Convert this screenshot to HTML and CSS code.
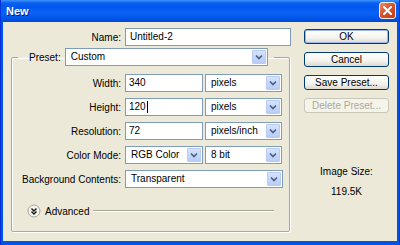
FILE: index.html
```html
<!DOCTYPE html>
<html lang="en">
<head>
    <meta charset="UTF-8">
    <title>New</title>
    <link rel="stylesheet" href="styles.css">
</head>
<body>
    <div class="window">
        <div class="titlebar">
            <span class="title">New</span>
            <span class="close">
                <svg width="9" height="9" viewBox="0 0 9 9"><path d="M1 1 L8 8 M8 1 L1 8" stroke="#fff" stroke-width="2" stroke-linecap="square"/></svg>
            </span>
        </div>
        <div class="content">
            <div class="main">
                <div class="name-row">
                    <label class="label">Name:</label>
                    <div class="field name-field">Untitled-2</div>
                </div>
                <fieldset class="group">
                    <legend class="preset">
                        <span class="preset-inner">
                            <label class="preset-label">Preset:</label>
                            <span class="combo preset-combo"><span class="val">Custom</span><span class="drop"><svg width="8" height="6" viewBox="0 0 8 6"><path d="M1 1.5 L4 4.5 L7 1.5" fill="none" stroke="#4d6185" stroke-width="1.7"/></svg></span></span>
                        </span>
                    </legend>
                    <div class="rows">
                        <label class="label">Width:</label>
                        <div class="field">340</div>
                        <span class="combo"><span class="val">pixels</span><span class="drop"><svg width="8" height="6" viewBox="0 0 8 6"><path d="M1 1.5 L4 4.5 L7 1.5" fill="none" stroke="#4d6185" stroke-width="1.7"/></svg></span></span>

                        <label class="label">Height:</label>
                        <div class="field">120<span class="caret"></span></div>
                        <span class="combo"><span class="val">pixels</span><span class="drop"><svg width="8" height="6" viewBox="0 0 8 6"><path d="M1 1.5 L4 4.5 L7 1.5" fill="none" stroke="#4d6185" stroke-width="1.7"/></svg></span></span>

                        <label class="label">Resolution:</label>
                        <div class="field">72</div>
                        <span class="combo"><span class="val">pixels/inch</span><span class="drop"><svg width="8" height="6" viewBox="0 0 8 6"><path d="M1 1.5 L4 4.5 L7 1.5" fill="none" stroke="#4d6185" stroke-width="1.7"/></svg></span></span>

                        <label class="label">Color Mode:</label>
                        <span class="combo"><span class="val">RGB Color</span><span class="drop"><svg width="8" height="6" viewBox="0 0 8 6"><path d="M1 1.5 L4 4.5 L7 1.5" fill="none" stroke="#4d6185" stroke-width="1.7"/></svg></span></span>
                        <span class="combo"><span class="val">8 bit</span><span class="drop"><svg width="8" height="6" viewBox="0 0 8 6"><path d="M1 1.5 L4 4.5 L7 1.5" fill="none" stroke="#4d6185" stroke-width="1.7"/></svg></span></span>

                        <label class="label">Background Contents:</label>
                        <span class="combo wide"><span class="val">Transparent</span><span class="drop"><svg width="8" height="6" viewBox="0 0 8 6"><path d="M1 1.5 L4 4.5 L7 1.5" fill="none" stroke="#4d6185" stroke-width="1.7"/></svg></span></span>
                    </div>
                    <div class="advanced">
                        <svg class="adv-icon" width="14" height="14" viewBox="0 0 14 14">
                            <circle cx="7" cy="7" r="6" fill="#f4f3ee" stroke="#a7a69a"/>
                            <path d="M4.5 4.5 L7 7 L9.5 4.5 M4.5 7.5 L7 10 L9.5 7.5" fill="none" stroke="#111" stroke-width="1.3"/>
                        </svg>
                        <span class="adv-text">Advanced</span>
                        <span class="adv-line"></span>
                    </div>
                </fieldset>
            </div>
            <div class="side">
                <button class="btn default">OK</button>
                <button class="btn">Cancel</button>
                <button class="btn">Save Preset...</button>
                <button class="btn" disabled>Delete Preset...</button>
                <div class="size">
                    <div>Image Size:</div>
                    <div>119.5K</div>
                </div>
            </div>
        </div>
    </div>
</body>
</html>
```

FILE: styles.css
```css
body {
    margin: 0;
    font-family: "Liberation Sans", Arial, sans-serif;
    font-size: 10px;
    color: #000;
}

.window {
    width: 400px;
    height: 245px;
    display: flex;
    flex-direction: column;
    background: #0054e3;
    box-sizing: border-box;
    border-left: 1px solid #0831d9;
    border-right: 1px solid #0831d9;
}

.titlebar {
    height: 22px;
    display: flex;
    justify-content: space-between;
    align-items: flex-start;
    padding: 0 3px 0 5px;
    background: linear-gradient(to bottom, #3d95ff 0, #0a5ff0 3px, #0058ee 7px, #0a62f6 13px, #0056e8 18px, #0048d4 22px);
}

.title {
    margin-top: 5px;
    color: #fff;
    font-weight: bold;
    font-size: 11px;
    text-shadow: 1px 1px 0 #0a1e80;
}

.close {
    width: 17px;
    height: 17px;
    margin-top: 2px;
    box-sizing: border-box;
    border: 1px solid #f4f0ea;
    border-radius: 3px;
    background: linear-gradient(135deg, #ef8a68 0%, #d9542c 45%, #c23c18 100%);
    display: flex;
    align-items: center;
    justify-content: center;
}

.content {
    flex: 1;
    display: flex;
    margin: 0 2px 4px 2px;
    background: #ece9d8;
}

.main {
    width: 291px;
    box-sizing: border-box;
    padding: 6px 0 0 8px;
}

.name-row {
    display: flex;
    align-items: center;
}

.name-row .label {
    width: 114px;
}

.label {
    text-align: right;
    padding-right: 4px;
    box-sizing: border-box;
    white-space: nowrap;
}

.field {
    height: 18px;
    box-sizing: border-box;
    border: 1px solid #7f9db9;
    background: #fff;
    padding-left: 3px;
    line-height: 16px;
    display: flex;
    align-items: center;
}

.name-field {
    width: 166px;
    padding-left: 4px;
}

.caret {
    width: 1px;
    height: 12px;
    margin-left: 1px;
    background: #000;
}

.group {
    margin: 2px 0 0 0;
    width: 279px;
    box-sizing: border-box;
    padding: 8px 0 13px 0;
    border: 1px solid #aca899;
    border-radius: 2px;
    box-shadow: inset 1px 1px 0 #fff, 1px 1px 0 #fff;
}

.preset {
    margin-left: 6px;
    padding: 0 6px 0 11px;
}

.preset-inner {
    display: flex;
    align-items: center;
}

.preset-label {
    padding-right: 4px;
}

.combo {
    height: 18px;
    box-sizing: border-box;
    border: 1px solid #7f9db9;
    background: #fff;
    display: flex;
    align-items: stretch;
}

.preset-combo {
    width: 203px;
}

.val {
    flex: 1;
    padding-left: 5px;
    line-height: 16px;
    white-space: nowrap;
}

.drop {
    width: 14px;
    margin: 1px;
    box-sizing: border-box;
    border: 1px solid #b9cbf3;
    border-radius: 1px;
    background: linear-gradient(to bottom, #d6e2fd, #b8ccf8);
    display: flex;
    align-items: center;
    justify-content: center;
}

.rows {
    display: grid;
    grid-template-columns: 109px 78px 77px;
    column-gap: 3px;
    row-gap: 6px;
    align-items: center;
}

.rows .label {
    padding-right: 0;
}

.rows .label + .field,
.rows .label + .combo {
    margin-left: 1px;
    margin-right: -1px;
}

.wide {
    grid-column: 2 / 4;
}

.advanced {
    display: flex;
    align-items: center;
    height: 14px;
    margin: 16px 15px 0 15px;
}

.adv-text {
    margin-left: 4px;
}

.adv-line {
    flex: 1;
    margin-left: 4px;
    height: 0;
    border-top: 1px solid #aca899;
    border-bottom: 1px solid #fff;
}

.side {
    display: flex;
    flex-direction: column;
    gap: 8px;
    padding: 7px 0 0 10px;
    width: 85px;
}

.btn {
    height: 15px;
    width: 85px;
    padding: 0;
    font-family: inherit;
    font-size: 10px;
    color: #000;
    border: 1px solid #003c74;
    border-radius: 3px;
    background: linear-gradient(to bottom, #ffffff 0%, #f4f3ee 60%, #dcd8cc 100%);
}

.btn.default {
    box-shadow: inset 0 0 0 1px #9db7f0;
}

.btn:disabled {
    border-color: #c9c7ba;
    background: #f5f4ea;
    color: #aca899;
}

.size {
    margin-top: 41px;
    text-align: center;
    line-height: 20px;
}
```
